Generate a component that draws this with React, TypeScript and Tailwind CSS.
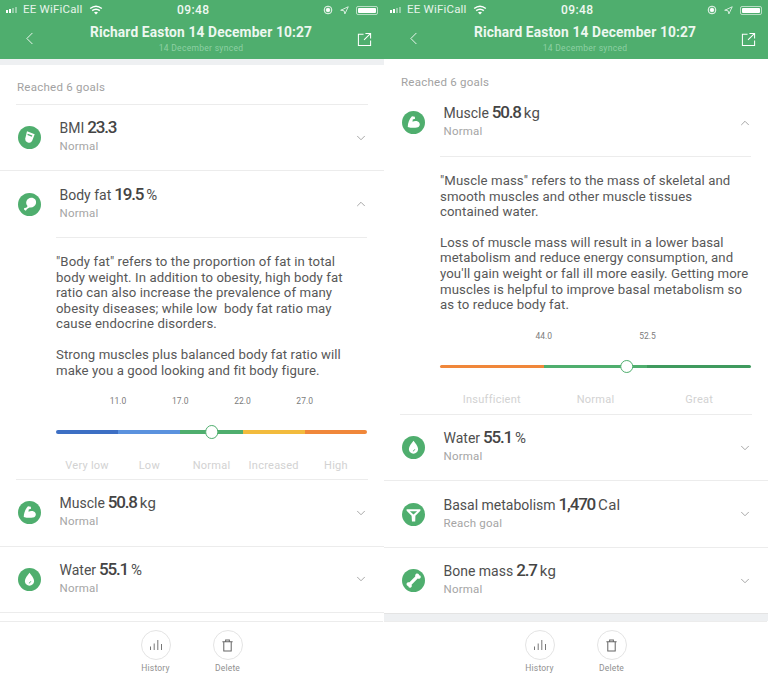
import { ChevronDown, ChevronUp, ChevronLeft, Navigation } from "lucide-react"
import type { ReactNode } from "react"

const font = "font-['Roboto','Liberation_Sans',sans-serif]"

function SportIcon({ kind }: { kind: string }) {
  return (
    <svg viewBox="0 0 24 24" className="w-[23px] h-[23px] shrink-0">
      <circle cx="12" cy="12" r="12" fill="#4fae6e" />
      {kind === "bmi" && (
        <g>
          <path d="M9.4 5.4 L17.4 8.6 L14.8 15.4 Q13.4 18.4 10.2 17.2 Q7.2 16 7.6 13 Z" fill="#fff" />
          <path d="M10.2 8 L15 10 L14.4 11.2 L9.8 9.4 Z" fill="#4fae6e" />
        </g>
      )}
      {kind === "fat" && (
        <g fill="#fff">
          <path d="M13.6 5 C17 4.8 19.4 7.4 18.8 10.6 C18.2 13.8 14.6 15.8 11.8 14.8 C9 13.6 7.8 10.8 9 8.2 C9.8 6.2 11.6 5.2 13.6 5 Z" />
          <path d="M10.6 13 L8.6 15.4 L6.4 15.6 L6.4 17.4 L8.2 18.4 L9.4 16.8 L12.4 14.8 Z" />
        </g>
      )}
      {kind === "muscle" && (
        <path d="M10.4 5.6 L13.4 6 L13.6 8.2 L11.2 8.8 L11 11.2 C13 9.8 16.8 10 18.2 12.4 C19.2 14.4 18.2 16.8 15.6 17.2 C12.6 17.6 9 17.6 6 16.6 C6 13 7.6 8.4 10.4 5.6 Z" fill="#fff" />
      )}
      {kind === "water" && (
        <g>
          <path d="M12 5 C14 8 16.8 10.6 16.8 13.6 C16.8 16.4 14.6 18.4 12 18.4 C9.4 18.4 7.2 16.4 7.2 13.6 C7.2 10.6 10 8 12 5 Z" fill="#fff" />
          <path d="M11.4 15.8 Q13 15.4 13.4 13.8" stroke="#4fae6e" strokeWidth="0.9" fill="none" />
        </g>
      )}
      {kind === "basal" && (
        <path d="M4.8 6.6 H19.2 L19.2 8 L14 13.4 L13.8 19.4 L10.4 19.4 L10 13.4 L4.8 8 Z M8.2 8.6 L12 12 L15.8 8.6 Z" fill="#fff" fillRule="evenodd" />
      )}
      {kind === "bone" && (
        <path d="M15.2 4.8 C16.8 4.4 18 5.6 17.8 6.6 C19.2 6.4 20 8 19.4 9.2 C18.8 10.4 17.2 10.4 16.4 10 L10 16.4 C10.4 17.2 10.4 18.8 9.2 19.4 C8 20 6.4 19.2 6.6 17.8 C5.6 18 4.4 16.8 4.8 15.2 C5.2 14 6.6 13.6 7.8 13.8 L13.8 7.8 C13.6 6.6 14 5.2 15.2 4.8 Z" fill="#fff" />
      )}
    </svg>
  )
}

function Row({
  kind, name, value, unit, status, open, last, size = "h-[66px]",
}: {
  kind: string; name: string; value: string; unit?: string; status: string; open?: boolean; last?: boolean; size?: string
}) {
  return (
    <div className={`${size} flex items-center pl-[18px] pr-[17px] ${!open && !last ? "border-b border-[#ececec]" : ""}`}>
      <SportIcon kind={kind} />
      <div className="ml-[18.5px] flex-1 -mt-[3px]">
        <div className="flex items-baseline text-[#4f4f4f] leading-[18px]">
          <span className="text-[14px]">{name}</span>
          <span className="ml-[3px] text-[17px] font-medium tracking-[-1.2px] text-[#444444]">{value}</span>
          {unit && <span className="ml-[3px] text-[15px] tracking-[0.3px]">{unit}</span>}
        </div>
        <div className="text-[11.5px] leading-[15px] mt-[2px] tracking-[0.2px] text-[#a5a5a5]">{status}</div>
      </div>
      {open ? (
        <ChevronUp className="w-[14px] h-[14px] text-[#8c8c8c] mr-[-1px]" strokeWidth={1.3} />
      ) : (
        <ChevronDown className="w-[14px] h-[14px] text-[#8c8c8c] mr-[-1px]" strokeWidth={1.3} />
      )}
    </div>
  )
}

function Scale({
  values, labels, segments, thumbLeft, pad,
}: {
  values: string[]; labels: string[]; segments: string[]; thumbLeft: string; pad: string
}) {
  return (
    <div className="pl-[56px] pr-[17px]">
      <div className={`flex ${pad} text-[8.5px] leading-[11px] text-[#7c7c7c]`}>
        {values.map((v) => (
          <span key={v} className="text-center" style={{ width: `${311 / labels.length}px` }}>{v}</span>
        ))}
      </div>
      <div className="relative mt-[23px] flex h-[3.5px] rounded-full">
        {segments.map((c, i) => (
          <div
            key={c}
            className={`flex-1 ${i === 0 ? "rounded-l-full" : ""} ${i === segments.length - 1 ? "rounded-r-full" : ""}`}
            style={{ backgroundColor: c }}
          />
        ))}
        <div
          className="absolute top-[-5px] w-[13.5px] h-[13.5px] rounded-full bg-white border-[1.5px] border-[#4fae6e] -translate-x-1/2"
          style={{ left: thumbLeft }}
        />
      </div>
      <div className="flex mt-[25px] text-[11px] leading-[13px] tracking-[0.25px] text-[#d2d2d2]">
        {labels.map((l) => (
          <span key={l} className="flex-1 text-center">{l}</span>
        ))}
      </div>
    </div>
  )
}

function Panel({ strip, children }: { strip?: boolean; children: ReactNode }) {
  return (
    <div className="w-[384px] h-[683px] flex flex-col bg-white overflow-hidden">
      <div className="h-[59px] bg-[#4fae6e] text-white shrink-0">
        <div className="h-[20px] relative flex items-center pl-[6px] pr-[6px] text-[11.5px]">
          <div className="flex items-end gap-[1px] h-[6px]">
            <span className="w-[2px] h-[3px] bg-white" />
            <span className="w-[2px] h-[4px] bg-white" />
            <span className="w-[2px] h-[5px] bg-white/40" />
            <span className="w-[2px] h-[6px] bg-white/40" />
          </div>
          <span className="ml-[6px] tracking-[0.2px] text-[#e6f4ea]">EE WiFiCall</span>
          <svg viewBox="0 0 16 12" className="ml-[6px] w-[14px] h-[10px]" fill="none" stroke="#fff" strokeWidth="1.8">
            <path d="M1 4.2 Q8 -1.4 15 4.2" />
            <path d="M3.4 6.8 Q8 3.2 12.6 6.8" />
            <path d="M8 11.4 L5.6 8.9 Q8 7.2 10.4 8.9 Z" fill="#fff" stroke="none" />
          </svg>
          <span className="absolute left-[177px] text-[12px] font-medium tracking-[0.4px] text-[#eef8f1]">09:48</span>
          <div className="ml-auto flex items-center gap-[7px]">
            <svg viewBox="0 0 12 12" className="w-[10px] h-[10px]" fill="none" stroke="#fff" strokeWidth="1.1">
              <circle cx="6" cy="6" r="4.6" />
              <circle cx="6" cy="6" r="2.2" fill="#fff" />
            </svg>
            <Navigation className="w-[9px] h-[9px]" strokeWidth={2} />
            <div className="w-[22px] h-[9px] rounded-[2px] border border-white/60 p-[1px] flex">
              <div className="flex-1 rounded-[1px] bg-white" />
            </div>
          </div>
        </div>
        <div className="flex items-start h-[39px]">
          <div className="w-[74px] pl-[19px] pt-[8px] shrink-0">
            <ChevronLeft className="w-[21px] h-[21px]" strokeWidth={1} />
          </div>
          <div className="flex-1 text-center pt-[2px] whitespace-nowrap">
            <div className="text-[13.75px] font-bold leading-[20px] tracking-[0.15px] text-[#edf7f0]">Richard Easton 14 December 10:27</div>
            <div className="text-[8.5px] leading-[11px] mt-[1px] tracking-[0.3px] text-[#8ed0a4]">14 December synced</div>
          </div>
          <div className="w-[56px] pl-[29px] pt-[12px] shrink-0">
            <svg viewBox="0 0 16 16" className="w-[15px] h-[15px]" fill="none" stroke="#fff" strokeWidth="1.1">
              <path d="M7 2.5 H1.5 V14.5 H14.5 V9" />
              <path d="M7.5 8.5 L14.5 1.5 M9 1.5 H14.5 V7" />
            </svg>
          </div>
        </div>
      </div>
      {strip && <div className="h-[6px] bg-[#eef0f2] shrink-0" />}
      <div className="flex-1 min-h-0 overflow-hidden">{children}</div>
      <div className="h-[62px] shrink-0 border-t border-[#ececec] flex justify-center gap-[42px] pt-[8px] mr-[1px]">
        <div className="w-[30px] flex flex-col items-center">
          <div className="w-[30px] h-[30px] rounded-full border border-[#e4e4e4] flex items-center justify-center">
            <svg viewBox="0 0 14 14" className="w-[14px] h-[14px]" stroke="#777" strokeWidth="1" fill="none">
              <path d="M1.5 12 V8.5 M5.2 12 V5.5 M8.8 12 V2 M12.5 12 V6" />
            </svg>
          </div>
          <span className="mt-[3px] text-[8.5px] leading-[11px] tracking-[0.2px] text-[#909090]">History</span>
        </div>
        <div className="w-[30px] flex flex-col items-center">
          <div className="w-[30px] h-[30px] rounded-full border border-[#e4e4e4] flex items-center justify-center">
            <svg viewBox="0 0 14 14" className="w-[13px] h-[13px]" stroke="#666" strokeWidth="1.1" fill="none">
              <path d="M1.5 3 H12.5 M5 3 V1 H9 V3 M3 3 V13 H11 V3" />
            </svg>
          </div>
          <span className="mt-[3px] text-[8.5px] leading-[11px] tracking-[0.2px] text-[#909090]">Delete</span>
        </div>
      </div>
    </div>
  )
}

const goals = "text-[11.5px] tracking-[0.25px] leading-[14px] text-[#a2a2a2] pl-[17px]"
const body = "text-[13.2px] leading-[15.6px] text-[#585858] tracking-[0.1px]"

export default function App() {
  return (
    <div className={`w-[768px] h-[683px] flex overflow-hidden ${font}`}>
      <Panel strip>
        <div className="pt-[15px] h-full flex flex-col">
          <div className={goals}>Reached 6 goals</div>
          <div className="mx-[16px] mt-[10px] border-t border-[#ececec]" />
          <Row kind="bmi" name="BMI" value="23.3" status="Normal" />
          <Row kind="fat" name="Body fat" value="19.5" unit="%" status="Normal" open />
          <div className="ml-[56px] mr-[17px] border-t border-[#ececec]" />
          <div className={`pl-[56px] pr-[17px] mt-[16px] whitespace-nowrap ${body}`}>
            <p>"Body fat" refers to the proportion of fat in total<br />body weight. In addition to obesity, high body fat<br />ratio can also increase the prevalence of many<br />obesity diseases; while low&nbsp; body fat ratio may<br />cause endocrine disorders.</p>
            <p className="mt-[15px]">Strong muscles plus balanced body fat ratio will<br />make you a good looking and fit body figure.</p>
          </div>
          <div className="mt-[18px]">
            <Scale
              pad="pl-[31px]"
              values={["11.0", "17.0", "22.0", "27.0"]}
              labels={["Very low", "Low", "Normal", "Increased", "High"]}
              segments={["#3d6fc4", "#5b92de", "#4fae6e", "#f2bb3d", "#f0873a"]}
              thumbLeft="50%"
            />
          </div>
          <div className="mx-[16px] mt-[7px] border-t border-[#ececec]" />
          <Row kind="muscle" name="Muscle" value="50.8" unit="kg" status="Normal" size="h-[67px]" />
          <Row kind="water" name="Water" value="55.1" unit="%" status="Normal" />
        </div>
      </Panel>
      <Panel>
        <div className="h-full flex flex-col pt-[16px]">
          <div className={goals}>Reached 6 goals</div>
          <Row kind="muscle" name="Muscle" value="50.8" unit="kg" status="Normal" open size="h-[67px]" />
          <div className="ml-[56px] mr-[17px] border-t border-[#ececec]" />
          <div className={`pl-[56px] pr-[17px] mt-[16px] whitespace-nowrap ${body}`}>
            <p>"Muscle mass" refers to the mass of skeletal and<br />smooth muscles and other muscle tissues<br />contained water.</p>
            <p className="mt-[15px]">Loss of muscle mass will result in a lower basal<br />metabolism and reduce energy consumption, and<br />you'll gain weight or fall ill more easily. Getting more<br />muscles is helpful to improve basal metabolism so<br />as to reduce body fat.</p>
          </div>
          <div className="mt-[18px]">
            <Scale
              pad="pl-[52px]"
              values={["44.0", "52.5"]}
              labels={["Insufficient", "Normal", "Great"]}
              segments={["#f0873a", "#4fae6e", "#3f9a5e"]}
              thumbLeft="60%"
            />
          </div>
          <div className="mx-[16px] mt-[8px] border-t border-[#ececec]" />
          <Row kind="water" name="Water" value="55.1" unit="%" status="Normal" />
          <Row kind="basal" name="Basal metabolism" value="1,470" unit="Cal" status="Reach goal" size="h-[67px]" />
          <Row kind="bone" name="Bone mass" value="2.7" unit="kg" status="Normal" last size="h-[65px]" />
          <div className="flex-1 bg-[#eef0f2] border-t border-[#e4e4e4]" />
        </div>
      </Panel>
    </div>
  )
}
